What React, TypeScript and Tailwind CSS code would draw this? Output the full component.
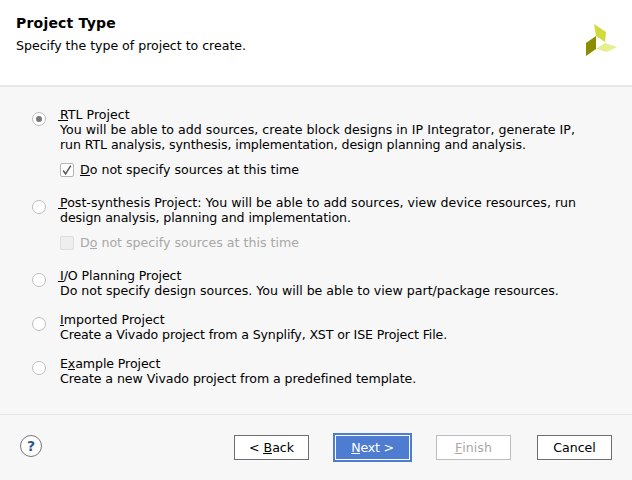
function Mn({ children, ext = false }: { children: React.ReactNode; ext?: boolean }) {
  return (
    <span className="relative">
      <span className={`absolute right-0 bottom-[1px] h-px bg-current ${ext ? 'left-[-2px]' : 'left-0'}`} />
      {children}
    </span>
  );
}

function Radio({ checked = false }: { checked?: boolean }) {
  return (
    <div className="w-[14px] h-[14px] mt-[5px] rounded-full border border-[#bdbdbd] bg-white flex items-center justify-center shrink-0">
      {checked && <div className="w-[6px] h-[6px] rounded-full bg-[#777777]" />}
    </div>
  );
}

function CheckRow({ disabled = false, mn, before, after }: { disabled?: boolean; mn: string; before: string; after: string }) {
  return (
    <div className={`flex items-center h-[15px] gap-[6px] ${disabled ? 'text-[#a8a8a8]' : 'text-black'}`}>
      <div className={`w-[14px] h-[14px] rounded-[2px] border flex items-center justify-center ${disabled ? 'border-[#dddddd] bg-[#eeeeee]' : 'border-[#b5b5b5] bg-white'}`}>
        {!disabled && (
          <svg width="12" height="12" viewBox="0 0 12 12">
            <path d="M2.2 6.5 L4.6 10 L9.8 1.6" fill="none" stroke="#555" strokeWidth="1.5" />
          </svg>
        )}
      </div>
      <span>{before}<Mn>{mn}</Mn>{after}</span>
    </div>
  );
}

function Option({ checked, title, children, className = '' }: { checked?: boolean; title: React.ReactNode; children?: React.ReactNode; className?: string }) {
  return (
    <div className={`flex gap-[14px] ${className}`}>
      <Radio checked={checked} />
      <div className="flex flex-col whitespace-nowrap">
        <div className="h-[15px]">{title}</div>
        {children}
      </div>
    </div>
  );
}

function Btn({ children, kind = 'normal' }: { children: React.ReactNode; kind?: 'normal' | 'primary' | 'disabled' }) {
  const cls =
    kind === 'primary'
      ? 'bg-[#4d7cd0] text-white border border-white outline-2 outline-[#4d7cd0] tracking-[-0.2px]'
      : kind === 'disabled'
      ? 'bg-white text-[#a8a8a8] border border-[#bdbdbd]'
      : 'bg-white text-black border border-[#6e6e6e]';
  return <div className={`w-[75px] h-[25px] flex items-center justify-center ${cls}`}>{children}</div>;
}

export default function App() {
  return (
    <div className="w-[632px] h-[480px] flex flex-col bg-[#f7f7f7] font-['DejaVu_Sans',sans-serif] text-[12.6px] leading-[15px] text-black overflow-hidden">
      <header className="h-[87px] shrink-0 bg-white border-b-2 border-[#e8e8e8] flex justify-between pl-4 pr-[14px]">
        <div className="pt-[15px]">
          <div className="font-bold text-[14px] leading-[16px] tracking-[0.2px]">Project Type</div>
          <div className="mt-[7px] tracking-[-0.03px]">Specify the type of project to create.</div>
        </div>
        <svg width="34" height="34" viewBox="0 0 34 34" className="mt-[24px]">
          <polygon points="10,0 22,8 21,18 12,12" fill="#cfdc3a" />
          <polygon points="2,19 12,12 12,25 2,32" fill="#8c8c00" />
          <polygon points="12,25 21,19 33,23 23,28" fill="#e6ee8e" />
        </svg>
      </header>
      <main className="flex-1 flex flex-col pl-[32px] pt-[20px] border-b border-[#e6e6e6]">
        <Option checked title={<><Mn ext>R</Mn>TL Project</>}>
          <div className="h-[15px] tracking-[0.012px]">You will be able to add sources, create block designs in IP Integrator, generate IP,</div>
          <div className="h-[15px] tracking-[-0.095px]">run RTL analysis, synthesis, implementation, design planning and analysis.</div>
          <div className="mt-[10px]"><CheckRow before="" mn="D" after="o not specify sources at this time" /></div>
        </Option>
        <Option className="mt-[18px]" title={<><Mn ext>P</Mn>ost-synthesis Project: You will be able to add sources, view device resources, run</>}>
          <div className="h-[15px] tracking-[-0.09px]">design analysis, planning and implementation.</div>
          <div className="mt-[10px]"><CheckRow disabled before="D" mn="o" after=" not specify sources at this time" /></div>
        </Option>
        <Option className="mt-[18px]" title={<span className="tracking-[-0.1px]"><Mn ext>I</Mn>/O Planning Project</span>}>
          <div className="h-[15px] tracking-[-0.012px]">Do not specify design sources. You will be able to view part/package resources.</div>
        </Option>
        <Option className="mt-[14px]" title={<><Mn>I</Mn>mported Project</>}>
          <div className="h-[15px] tracking-[-0.14px]">Create a Vivado project from a Synplify, XST or ISE Project File.</div>
        </Option>
        <Option className="mt-[14px]" title={<span className="tracking-[-0.1px]">E<Mn>x</Mn>ample Project</span>}>
          <div className="h-[15px] tracking-[-0.07px]">Create a new Vivado project from a predefined template.</div>
        </Option>
      </main>
      <footer className="h-[65px] shrink-0 flex items-start pt-[20px] px-[20px]">
        <div className="w-[22px] h-[22px] rounded-full border border-[#777] bg-white flex items-center justify-center font-bold text-[14px] text-[#2f5597]">?</div>
        <div className="ml-auto flex gap-[26px]">
          <Btn>&lt;&nbsp;<Mn>B</Mn>ack</Btn>
          <Btn kind="primary"><Mn>N</Mn>ext &gt;</Btn>
          <Btn kind="disabled"><Mn>F</Mn>inish</Btn>
          <Btn>Cancel</Btn>
        </div>
      </footer>
    </div>
  );
}
